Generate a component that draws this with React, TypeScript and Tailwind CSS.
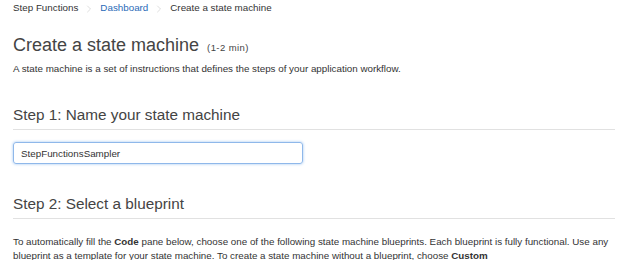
import { ChevronRight } from 'lucide-react';

export default function App() {
  return (
    <div className="w-[640px] h-[260px] overflow-hidden bg-white px-[13px] font-['Liberation_Sans',Arial,sans-serif] text-[#444]">
      {/* Breadcrumb */}
      <nav className="flex items-center h-[17px] text-[9.8px] text-[#333]">
        <span>Step Functions</span>
        <ChevronRight className="w-[12px] h-[12px] mx-[5px] text-[#ccc]" strokeWidth={1.3} />
        <span className="text-[#2a6bb8]">Dashboard</span>
        <ChevronRight className="w-[12px] h-[12px] mx-[5px] text-[#ccc]" strokeWidth={1.3} />
        <span>Create a state machine</span>
      </nav>

      <h1 className="mt-[17px] flex items-baseline text-[18px] leading-[22px] text-[#444]">
        Create a state machine
        <span className="ml-[8px] text-[9.5px] tracking-[0.4px] text-[#444]">(1-2 min)</span>
      </h1>
      <p className="mt-[4px] text-[9.8px] leading-[12px] text-[#333]">
        A state machine is a set of instructions that defines the steps of your application workflow.
      </p>

      <h2 className="mt-[31px] w-[602px] border-b border-[#e1e1e1] pb-[5px] text-[15.3px] leading-[18px] text-[#444]">
        Step 1: Name your state machine
      </h2>
      <input
        className="mt-[12px] block w-[290px] h-[22px] rounded-[3px] border border-[#8fb8ea] px-[7px] text-[9.8px] text-[#333] shadow-[0_0_3px_#9cc3f0] outline-none"
        defaultValue="StepFunctionsSampler"
      />

      <h2 className="mt-[31px] w-[602px] border-b border-[#e1e1e1] pb-[5px] text-[15.3px] leading-[18px] text-[#444]">
        Step 2: Select a blueprint
      </h2>
      <p className="mt-[16px] w-[604px] text-[9.8px] leading-[14px] text-[#333]">
        To automatically fill the <b>Code</b> pane below, choose one of the following state machine blueprints. Each blueprint is fully functional. Use any blueprint as a template for your state machine. To create a state machine without a blueprint, choose <b>Custom</b>
      </p>
    </div>
  );
}
